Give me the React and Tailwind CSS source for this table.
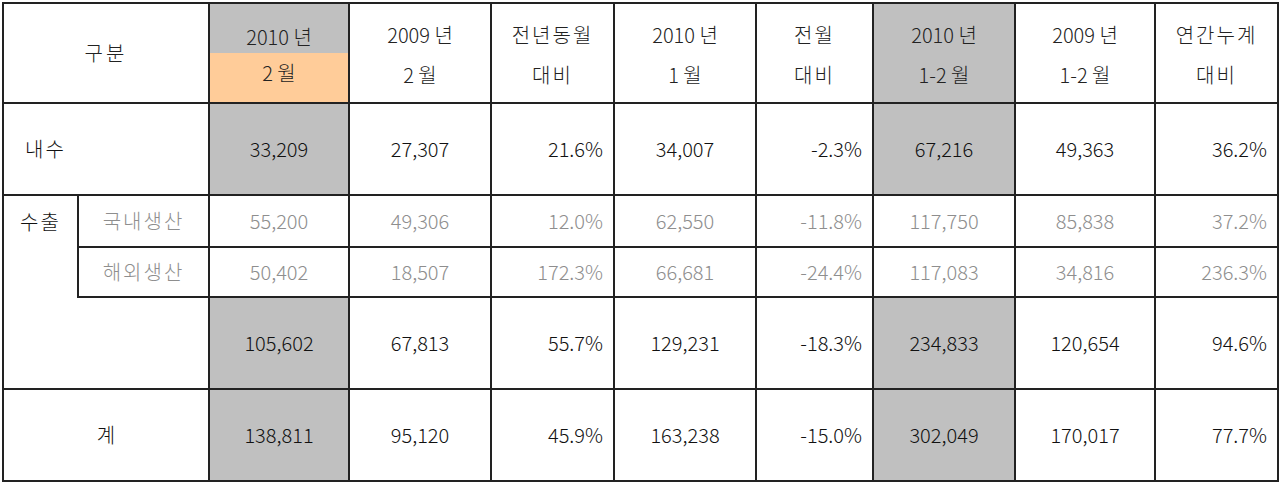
import React from 'react';

const font = { fontFamily: '"Noto Sans CJK KR", "Noto Sans", sans-serif' };

// column widths taken from the grid lines of the sheet
const widths = [75, 131, 140, 142, 123, 142, 117, 142, 140, 123];

const rows = [
  { key: 'domestic', values: ['33,209', '27,307', '21.6%', '34,007', '-2.3%', '67,216', '49,363', '36.2%'], muted: false },
  { key: 'local', values: ['55,200', '49,306', '12.0%', '62,550', '-11.8%', '117,750', '85,838', '37.2%'], muted: true },
  { key: 'overseas', values: ['50,402', '18,507', '172.3%', '66,681', '-24.4%', '117,083', '34,816', '236.3%'], muted: true },
  { key: 'export', values: ['105,602', '67,813', '55.7%', '129,231', '-18.3%', '234,833', '120,654', '94.6%'], muted: false },
  { key: 'total', values: ['138,811', '95,120', '45.9%', '163,238', '-15.0%', '302,049', '170,017', '77.7%'], muted: false },
];

// which of the 8 value columns are percentages (right aligned) / shaded
const pct = [false, false, true, false, true, false, false, true];
const shaded = [true, false, false, false, false, true, false, false];

const cell = 'border-2 border-[#222] p-0';

function Values({ values, muted }) {
  return values.map((v, i) => (
    <td
      key={i}
      className={`${cell} ${pct[i] ? 'text-right pr-[10px]' : 'text-center'} ${
        shaded[i] && !muted ? 'bg-[#c0c0c0]' : ''
      } ${muted ? 'text-[#8e8e8e]' : 'text-[#111]'}`}
    >
      {v}
    </td>
  ));
}

function HeadCell({ top, bottom, gray, ko }) {
  return (
    <td rowSpan={2} className={`${cell} text-center text-[#222] ${gray ? 'bg-[#c0c0c0]' : ''}`}>
      <div className={`leading-[40px] pt-[4px] ${ko ? 'tracking-[2px]' : ''}`}>{top}</div>
      <div className={`leading-[40px] ${ko ? 'tracking-[2px]' : ''}`}>{bottom}</div>
    </td>
  );
}

export default function App() {
  return (
    <div className="bg-white w-[1280px] h-[483px] pt-[2px] pl-[2px]" style={font}>
      <table className="table-fixed border-collapse w-[1277px] text-[20px] font-light">
        <colgroup>
          {widths.map((w, i) => (
            <col key={i} style={{ width: w }} />
          ))}
        </colgroup>
        <tbody>
          <tr className="h-[50px]">
            <td rowSpan={2} colSpan={2} className={`${cell} text-center text-[#222] tracking-[3px]`}>
              구분
            </td>
            <td className={`${cell} border-b-0 bg-[#c0c0c0] text-center text-[#222] align-bottom`}>
              <div className="leading-[40px] relative top-[4px]">2010 년</div>
            </td>
            <HeadCell top="2009 년" bottom="2 월" />
            <HeadCell top="전년동월" bottom="대비" ko />
            <HeadCell top="2010 년" bottom="1 월" />
            <HeadCell top="전월" bottom="대비" ko />
            <HeadCell top="2010 년" bottom="1-2 월" gray />
            <HeadCell top="2009 년" bottom="1-2 월" />
            <HeadCell top="연간누계" bottom="대비" ko />
          </tr>
          <tr className="h-[50px]">
            <td className={`${cell} border-t-0 bg-[#ffcc99] text-center text-[#222] align-top`}>
              <div className="leading-[40px]">2 월</div>
            </td>
          </tr>

          <tr className="h-[92px]">
            <td colSpan={2} className={`${cell} text-left pl-[21px] text-[#111] tracking-[2px]`}>
              내수
            </td>
            <Values {...rows[0]} />
          </tr>

          <tr className="h-[52px]">
            <td rowSpan={3} className={`${cell} border-r-0 align-top text-center text-[#111] tracking-[2px]`}>
              <div className="leading-[52px]">수출</div>
            </td>
            <td className={`${cell} text-center text-[#8e8e8e] tracking-[2px]`}>국내생산</td>
            <Values {...rows[1]} />
          </tr>
          <tr className="h-[50px]">
            <td className={`${cell} text-center text-[#8e8e8e] tracking-[2px]`}>해외생산</td>
            <Values {...rows[2]} />
          </tr>
          <tr className="h-[92px]">
            <td className={`${cell} border-l-0`}></td>
            <Values {...rows[3]} />
          </tr>

          <tr className="h-[92px]">
            <td colSpan={2} className={`${cell} text-center text-[#111]`}>
              계
            </td>
            <Values {...rows[4]} />
          </tr>
        </tbody>
      </table>
    </div>
  );
}
